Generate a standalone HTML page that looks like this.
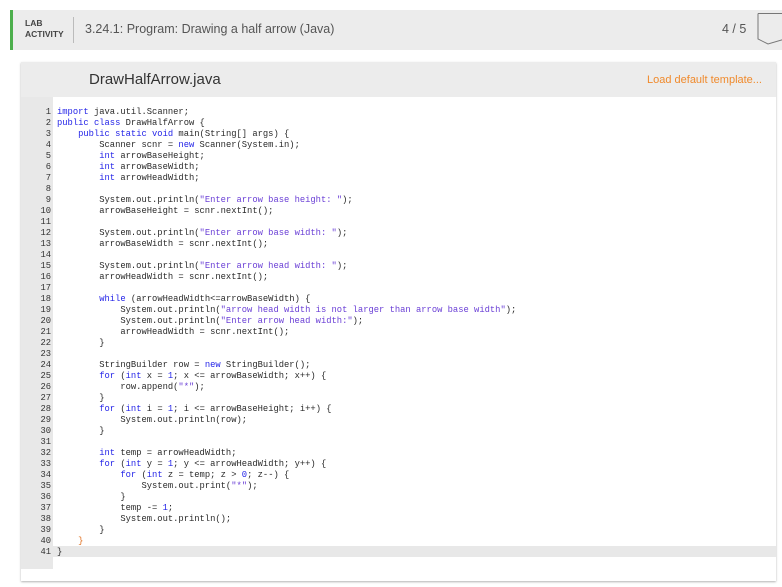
<!DOCTYPE html>
<html><head><meta charset="utf-8"><style>
*{margin:0;padding:0;box-sizing:border-box}
body{width:782px;height:587px;background:#fff;font-family:"Liberation Sans",sans-serif;position:relative;overflow:hidden}
.hdr{position:absolute;left:10px;top:10px;width:772px;height:40px;background:#ececec;border-left:3px solid #4cae4c}
.lab{position:absolute;left:12px;top:8px;font-size:8.5px;font-weight:bold;color:#444;line-height:11px}
.div{position:absolute;left:60px;top:7px;width:1px;height:26px;background:#bbb}
.ttl{position:absolute;left:72px;top:12px;font-size:12.5px;color:#555}
.pg{position:absolute;left:709px;top:12px;font-size:12.5px;color:#555}
.card{position:absolute;left:21px;top:62px;width:755px;height:519px;background:#fff;box-shadow:0 1px 2px rgba(0,0,0,.3)}
.tb{position:absolute;left:0;top:0;width:755px;height:35px;background:#ececec}
.fn{position:absolute;left:68px;top:9px;font-size:15px;color:#333}
.ld{position:absolute;left:626px;top:12px;font-size:11px;color:#f08a2c}
.gut{position:absolute;left:0;top:35px;width:32px;height:472px;background:#e8e8e8}
.hl{position:absolute;left:0;top:484px;width:755px;height:11px;background:#e8e8e8}
pre{position:absolute;top:45px;font-family:"Liberation Mono",monospace;font-size:8.8px;line-height:11px;color:#2a2a2a}
.nums{left:0;width:30px;text-align:right;color:#333}
.code{left:36px}
.k{color:#2424e8}.s{color:#6a3fd6}.n{color:#2424e8}.o{color:#e07020}
</style></head><body>
<div class="hdr"><div class="lab">LAB<br>ACTIVITY</div><div class="div"></div><div class="ttl">3.24.1: Program: Drawing a half arrow (Java)</div><div class="pg">4 / 5</div>
<svg style="position:absolute;left:742px;top:3px" width="30" height="32"><path d="M3 0.5H30M3 0.5V26L13 31L30 26" fill="none" stroke="#777" stroke-width="1"/></svg></div>
<div class="card"><div class="tb"><div class="fn">DrawHalfArrow.java</div><div class="ld">Load default template...</div></div>
<div class="gut"></div><div class="hl"></div>
<pre class="nums">1
2
3
4
5
6
7
8
9
10
11
12
13
14
15
16
17
18
19
20
21
22
23
24
25
26
27
28
29
30
31
32
33
34
35
36
37
38
39
40
41</pre>
<pre class="code"><span class="k">import</span> java.util.Scanner;
<span class="k">public class</span> DrawHalfArrow {
    <span class="k">public static void</span> main(String[] args) {
        Scanner scnr = <span class="k">new</span> Scanner(System.in);
        <span class="k">int</span> arrowBaseHeight;
        <span class="k">int</span> arrowBaseWidth;
        <span class="k">int</span> arrowHeadWidth;

        System.out.println(<span class="s">"Enter arrow base height: "</span>);
        arrowBaseHeight = scnr.nextInt();

        System.out.println(<span class="s">"Enter arrow base width: "</span>);
        arrowBaseWidth = scnr.nextInt();

        System.out.println(<span class="s">"Enter arrow head width: "</span>);
        arrowHeadWidth = scnr.nextInt();

        <span class="k">while</span> (arrowHeadWidth&lt;=arrowBaseWidth) {
            System.out.println(<span class="s">"arrow head width is not larger than arrow base width"</span>);
            System.out.println(<span class="s">"Enter arrow head width:"</span>);
            arrowHeadWidth = scnr.nextInt();
        }

        StringBuilder row = <span class="k">new</span> StringBuilder();
        <span class="k">for</span> (<span class="k">int</span> x = <span class="n">1</span>; x &lt;= arrowBaseWidth; x++) {
            row.append(<span class="s">"*"</span>);
        }
        <span class="k">for</span> (<span class="k">int</span> i = <span class="n">1</span>; i &lt;= arrowBaseHeight; i++) {
            System.out.println(row);
        }

        <span class="k">int</span> temp = arrowHeadWidth;
        <span class="k">for</span> (<span class="k">int</span> y = <span class="n">1</span>; y &lt;= arrowHeadWidth; y++) {
            <span class="k">for</span> (<span class="k">int</span> z = temp; z &gt; <span class="n">0</span>; z--) {
                System.out.print(<span class="s">"*"</span>);
            }
            temp -= <span class="n">1</span>;
            System.out.println();
        }
    <span class="o">}</span>
}</pre>
</div>
</body></html>
